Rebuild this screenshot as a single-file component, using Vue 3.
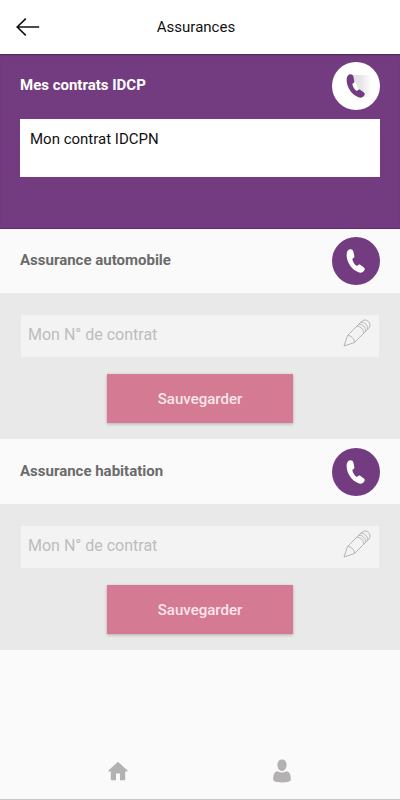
<script setup>
import { reactive } from 'vue'

const phonePath =
  'M17.2 12.5C15.1 13.5 14.4 16 14.7 19.6C15.4 26.4 20 32.8 26.4 35.3C29.2 36.3 31.9 35.2 32.7 32.5C32.9 31.7 32.6 31.1 31.9 30.5L28.5 27.9C27.6 27.3 26.7 27.4 26 28.1L25 29.1C22.7 27.7 20.9 25 20.3 21.9L21.5 21.1C22.2 20.6 22.5 19.9 22.3 19L21.3 14.2C20.9 12.5 19 11.7 17.2 12.5Z'

const contracts = reactive([
  { id: 'auto', title: 'Assurance automobile', number: '' },
  { id: 'habitation', title: 'Assurance habitation', number: '' },
])
</script>

<template>
  <div class="page">
    <header class="topbar">
      <button class="back" type="button" aria-label="Retour">
        <svg width="24" height="20" viewBox="0 0 24 20" fill="none" stroke="#111" stroke-width="1.6">
          <path d="M23.2 10H1M9.8 1.6L1.2 10L9.8 18.4" />
        </svg>
      </button>
      <h1>Assurances</h1>
    </header>

    <main>
      <section class="mine">
        <div class="heading">
          <h2>Mes contrats IDCP</h2>
          <button class="call light" type="button" aria-label="Appeler IDCP">
            <svg width="48" height="48" viewBox="0 0 48 48">
              <defs>
                <linearGradient id="shade" x1="0" x2="1" y1="0" y2="0">
                  <stop offset="0" stop-color="#dddddf" />
                  <stop offset="0.5" stop-color="#e9e9eb" />
                  <stop offset="1" stop-color="#fff" />
                </linearGradient>
              </defs>
              <path d="M20 13H40V35H30Z" fill="url(#shade)" />
              <path :d="phonePath" fill="#743c80" />
            </svg>
          </button>
        </div>
        <div class="contract">Mon contrat IDCPN</div>
      </section>

      <div class="list">
        <section v-for="item in contracts" :key="item.id">
          <div class="heading">
            <h2>{{ item.title }}</h2>
            <button class="call" type="button" :aria-label="'Appeler ' + item.title">
              <svg width="48" height="48" viewBox="0 0 48 48">
                <path :d="phonePath" fill="#fff" />
              </svg>
            </button>
          </div>
          <form class="editor" @submit.prevent>
            <label class="field">
              <input v-model="item.number" type="text" placeholder="Mon N° de contrat" aria-label="Mon N° de contrat" />
              <svg width="28" height="28" viewBox="0 0 28 28" fill="none" stroke="#b4b4b4" stroke-width="1">
                <path d="M1 27L4.5 16.5L18.3 2.7C20.6 0.4 23.7 0.6 25.5 2.5C27.4 4.3 27.5 7.4 25.3 9.7L11.5 23.5Z" />
                <path d="M4.5 16.5C8 16.4 11.4 19.5 11.5 23.5" />
                <path d="M13.8 7.2C17.6 7.1 20.8 10.3 20.8 14.1M15.8 5.2C19.6 5.1 22.8 8.3 22.8 12.1M17.8 3.2C21.6 3.1 24.8 6.3 24.8 10.1" />
              </svg>
            </label>
            <button class="save" type="submit">Sauvegarder</button>
          </form>
        </section>
      </div>
    </main>

    <nav class="tabs">
      <a href="#accueil" aria-label="Accueil">
        <svg width="20" height="20" viewBox="0 0 20 20" fill="#b3b1b2">
          <path d="M10 0.8L19.6 9.6Q19.8 10.4 19 10.4H17.2V18.4Q17.2 19.2 16.4 19.2H12V12.4H8V19.2H3.6Q2.8 19.2 2.8 18.4V10.4H1Q0.2 10.4 0.4 9.6Z" />
        </svg>
      </a>
      <a href="#profil" aria-label="Profil">
        <svg width="20" height="24" viewBox="0 0 20 24" fill="#b3b1b2">
          <path d="M10 0.5C13 0.5 14.6 2.7 14.6 5.8C14.6 9.1 12.8 12 10 12C7.2 12 5.4 9.1 5.4 5.8C5.4 2.7 7 0.5 10 0.5Z" />
          <path d="M5.4 12.2C8.2 13.9 11.8 13.9 14.6 12.2C17.6 12.8 18.8 15.4 18.8 19.4V20.6C18.8 22.6 15.4 23.4 10 23.4S1.2 22.6 1.2 20.6V19.4C1.2 15.4 2.4 12.8 5.4 12.2Z" />
        </svg>
      </a>
    </nav>
  </div>
</template>

<style>
body {
  margin: 0;
  background: #fafafa;
}
</style>

<style scoped>
.page {
  display: flex;
  flex-direction: column;
  min-height: 100vh;
  box-sizing: border-box;
  border-bottom: 1px solid #c8c8c8;
  background: #fafafa;
  font-family: Roboto, "Liberation Sans", sans-serif;
  font-size: 15px;
  line-height: 20px;
}

button {
  border: 0;
  padding: 0;
  font: inherit;
  cursor: pointer;
}

svg {
  display: block;
}

.topbar {
  display: grid;
  grid-template-columns: 24px 1fr 32px;
  align-items: center;
  height: 54px;
  padding: 0 16px;
  box-sizing: border-box;
  background: #fff;
}

.back {
  background: none;
}

h1,
h2 {
  margin: 0;
  font-size: 15px;
}

h1 {
  font-weight: 400;
  text-align: center;
  color: #111;
}

h2 {
  font-weight: 700;
  color: #6b6b6b;
}

main {
  flex: 1;
}

.mine {
  padding-bottom: 52px;
  background: #743c80;
  box-shadow: inset 0 2px 2px -1px #4d2458, inset 0 -1px #5c2b68;
}

.mine h2 {
  color: #fff;
}

.heading {
  display: flex;
  align-items: center;
  justify-content: space-between;
  padding: 8px 20px;
}

.heading h2 {
  padding-bottom: 2px;
}

.call {
  width: 48px;
  height: 48px;
  border-radius: 50%;
  background: #743c80;
}

.call.light {
  background: #fff;
}

.contract {
  min-height: 58px;
  margin: 1px 20px 0;
  padding: 10px;
  box-sizing: border-box;
  background: #fff;
  color: #111;
}

.list {
  display: grid;
  gap: 1px;
}

.editor {
  display: flex;
  flex-direction: column;
  align-items: center;
  gap: 17px;
  padding: 22px 21px 16px;
  background: #e9e9e9;
}

.field {
  display: flex;
  align-items: flex-start;
  align-self: stretch;
  height: 42px;
  padding: 4px 8px 0 7px;
  box-sizing: border-box;
  background: #f3f3f3;
}

.field input {
  flex: 1;
  min-width: 0;
  height: 30px;
  padding: 0;
  border: 0;
  outline: 0;
  background: none;
  font: inherit;
  font-size: 16px;
  color: #444;
}

.field input::placeholder {
  color: #bdbdbd;
  opacity: 1;
}

.save {
  width: 52%;
  height: 49px;
  background: #d47a93;
  color: #fbe6ec;
  font-weight: 500;
  box-shadow: 0 1px 3px rgba(0, 0, 0, 0.25);
}

.tabs {
  display: flex;
  justify-content: space-around;
  align-items: center;
  height: 56px;
  padding: 0 36px;
}
</style>
